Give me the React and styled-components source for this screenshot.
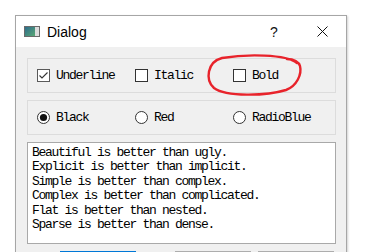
import React from 'react';
import styled, { createGlobalStyle } from 'styled-components';

const GlobalStyle = createGlobalStyle`
  html, body {
    margin: 0;
    padding: 0;
    background: #ffffff;
    overflow: hidden;
  }
`;

const Page = styled.div`
  position: relative;
  height: 252px;
  padding: 15px 0 0 15px;
  box-sizing: border-box;
`;

const Window = styled.div`
  width: 332px;
  height: 260px;
  box-sizing: border-box;
  border: 1px solid #a6a6a6;
  box-shadow: 1px 1px 2px rgba(0, 0, 0, 0.18);
  background: #f0f0f0;
  display: flex;
  flex-direction: column;
`;

const TitleBar = styled.div`
  height: 31px;
  flex: none;
  background: #ffffff;
  display: flex;
  align-items: center;
  padding-left: 8px;
`;

const TitleText = styled.span`
  margin-left: 7px;
  font-family: 'Segoe UI', 'Liberation Sans', sans-serif;
  font-size: 14px;
  color: #000;
  flex: 1;
`;

const TitleButton = styled.div`
  width: 48px;
  height: 31px;
  display: flex;
  align-items: center;
  justify-content: center;
  font-family: 'Segoe UI', 'Liberation Sans', sans-serif;
  font-size: 14px;
  color: #111;
`;

const Content = styled.div`
  display: flex;
  flex-direction: column;
  gap: 7px;
  padding: 11px 10px 0 11px;
`;

const Group = styled.div`
  height: 35px;
  box-sizing: border-box;
  border: 1px solid #dcdcdc;
  display: grid;
  grid-template-columns: 98px 98px 1fr;
  align-items: center;
  padding-left: 9px;
`;

const Option = styled.label`
  display: flex;
  align-items: center;
  gap: 6px;
  font-family: 'Liberation Mono', monospace;
  font-size: 13px;
  letter-spacing: -1.3px;
  color: #000;
`;

const Box = styled.span`
  width: 13px;
  height: 13px;
  box-sizing: border-box;
  border: 1px solid ${(p) => (p.checked ? '#5a5a5a' : '#333')};
  background: #fff;
  display: flex;
  align-items: center;
  justify-content: center;
  flex: none;
`;

const TextEdit = styled.div`
  height: 102px;
  box-sizing: border-box;
  border: 1px solid #a9a9a9;
  background: #fff;
  padding: 3px 4px;
  font-family: 'Liberation Mono', monospace;
  font-size: 13px;
  letter-spacing: -1.3px;
  line-height: 14.4px;
  color: #000;
  white-space: pre;
`;

const ButtonRow = styled.div`
  display: flex;
  padding-left: 33px;
`;

const Button = styled.button`
  width: 76px;
  height: 23px;
  margin-left: ${(p) => p.gap || 0}px;
  box-sizing: border-box;
  border: 1px solid ${(p) => (p.primary ? '#0078d7' : '#adadad')};
  box-shadow: ${(p) => (p.primary ? 'inset 0 0 0 1px #0078d7' : 'none')};
  background: #e1e1e1;
`;

const Annotation = styled.svg`
  position: absolute;
  left: 200px;
  top: 48px;
  pointer-events: none;
`;

const Checkbox = ({ checked, label }) => (
  <Option>
    <Box checked={checked}>
      {checked && (
        <svg width="11" height="11" viewBox="0 0 11 11">
          <polyline points="1.5,5.5 4,8 9.5,2.5" fill="none" stroke="#333" strokeWidth="1.1" />
        </svg>
      )}
    </Box>
    {label}
  </Option>
);

const Radio = ({ checked, label }) => (
  <Option>
    <svg width="13" height="13" viewBox="0 0 13 13" style={{ flex: 'none' }}>
      <circle cx="6.5" cy="6.5" r="6" fill="#fff" stroke="#333" strokeWidth="1" />
      {checked && <circle cx="6.5" cy="6.5" r="3.6" fill="#111" />}
    </svg>
    {label}
  </Option>
);

const AppIcon = () => (
  <svg width="16" height="11" viewBox="0 0 16 11">
    <defs>
      <linearGradient id="ig" x1="0" y1="0" x2="1" y2="1">
        <stop offset="0" stopColor="#2d6c8c" />
        <stop offset="1" stopColor="#5aa874" />
      </linearGradient>
    </defs>
    <rect x="0.5" y="0.5" width="15" height="10" fill="#dcdcdc" stroke="#6a6a6a" />
    <rect x="1" y="1" width="10" height="9" fill="url(#ig)" />
  </svg>
);

const lines = [
  'Beautiful is better than ugly.',
  'Explicit is better than implicit.',
  'Simple is better than complex.',
  'Complex is better than complicated.',
  'Flat is better than nested.',
  'Sparse is better than dense.',
];

export default function App() {
  return (
    <Page>
      <GlobalStyle />
      <Window>
        <TitleBar>
          <AppIcon />
          <TitleText>Dialog</TitleText>
          <TitleButton>?</TitleButton>
          <TitleButton>
            <svg width="11" height="11" viewBox="0 0 11 11">
              <path d="M0.5 0.5 L10.5 10.5 M10.5 0.5 L0.5 10.5" stroke="#111" strokeWidth="1" />
            </svg>
          </TitleButton>
        </TitleBar>
        <Content>
          <Group>
            <Checkbox checked label="Underline" />
            <Checkbox label="Italic" />
            <Checkbox label="Bold" />
          </Group>
          <Group>
            <Radio checked label="Black" />
            <Radio label="Red" />
            <Radio label="RadioBlue" />
          </Group>
          <TextEdit>{lines.join('\n')}</TextEdit>
          <ButtonRow>
            <Button primary aria-label="OK" />
            <Button gap={39} aria-label="Cancel" />
            <Button gap={7} aria-label="Apply" />
          </ButtonRow>
        </Content>
      </Window>
      <Annotation width="110" height="52" viewBox="200 48 110 52">
        <path
          d="M297 63 C286 54 246 54 222 58 C207 62 205 80 214 88 C226 97 266 96 286 90 C297 86 302 74 300 66 C299 62 294 59 287 59"
          fill="none"
          stroke="#e8232b"
          strokeWidth="2.4"
          strokeLinecap="round"
        />
      </Annotation>
    </Page>
  );
}
